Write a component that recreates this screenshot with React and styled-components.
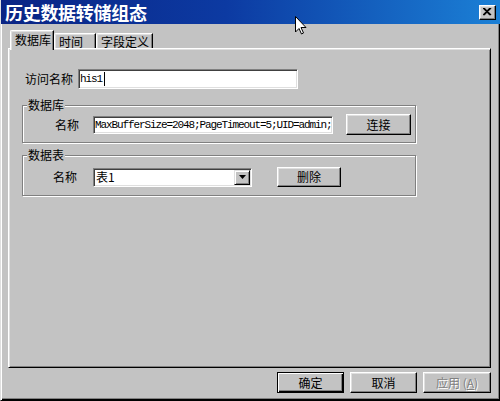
import React from 'react';
import styled, { createGlobalStyle } from 'styled-components';

const GlobalStyle = createGlobalStyle`
  html, body {
    margin: 0;
    padding: 0;
    background: #c3c3c3;
  }
  body {
    font-family: "Noto Sans CJK SC", "Liberation Sans", sans-serif;
    font-size: 12px;
  }
`;

const Window = styled.div`
  position: relative;
  width: 500px;
  height: 401px;
  box-sizing: border-box;
  background: #c3c3c3;
  display: flex;
  flex-direction: column;
  border-bottom: 1px solid #000;
  border-left: 1px solid #dfdfdf;
  box-shadow: inset 1px 0 #fff, inset -1px -1px #000, inset -2px -2px #808080;
  overflow: hidden;
`;

const TitleBar = styled.div`
  flex: none;
  height: 24px;
  display: flex;
  align-items: center;
  justify-content: space-between;
  padding: 0 4px 0 4px;
  background: linear-gradient(90deg, #0a2484 0%, #0c3aa2 45%, #1b80d6 100%);
`;

const Title = styled.span`
  color: #fff;
  font-weight: 700;
  font-size: 18px;
  line-height: 20px;
  letter-spacing: -0.3px;
`;

const CloseBox = styled.div`
  width: 17px;
  height: 15px;
  box-sizing: border-box;
  background: #c3c3c3;
  border: 1px solid;
  border-color: #fff #000 #000 #fff;
  box-shadow: inset -1px -1px #808080, inset 1px 1px #dfdfdf;
  display: flex;
  align-items: center;
  justify-content: center;
`;

const Body = styled.div`
  flex: 1;
  display: flex;
  flex-direction: column;
  padding: 6px 9px 0 7px;
`;

const TabStrip = styled.div`
  display: flex;
  align-items: flex-start;
  height: 20px;
  margin-bottom: -2px;
  padding-left: 2px;
  position: relative;
  z-index: 1;
`;

const Tab = styled.div`
  box-sizing: border-box;
  width: ${({ $w }) => $w}px;
  height: ${({ $active }) => ($active ? 20 : 15)}px;
  margin-top: ${({ $active }) => ($active ? 0 : 3)}px;
  padding: ${({ $active }) => ($active ? 3 : 2)}px 0 0 4px;
  line-height: 12px;
  color: #000;
  background: #c3c3c3;
  border-top: 1px solid #fff;
  border-left: 1px solid #fff;
  border-right: 1px solid #000;
  border-top-left-radius: 2px;
  box-shadow: inset -1px 0 #808080, inset 1px 1px #dfdfdf;
  white-space: nowrap;
`;

const Panel = styled.div`
  box-sizing: border-box;
  height: 320px;
  border: 1px solid;
  border-color: #fff #000 #000 #fff;
  box-shadow: inset 1px 1px #dfdfdf, inset -1px -1px #808080;
  padding: 20px 0 0 13px;
  display: flex;
  flex-direction: column;
  align-items: flex-start;
`;

const Row = styled.div`
  display: flex;
  align-items: center;
  padding-left: ${({ $indent }) => $indent || 0}px;
`;

const Label = styled.span`
  line-height: 12px;
  color: #000;
  margin-right: ${({ $gap }) => $gap}px;
  white-space: nowrap;
`;

const Sunken = styled.div`
  box-sizing: border-box;
  width: ${({ $w }) => $w}px;
  height: ${({ $h }) => $h}px;
  background: #fff;
  border: 1px solid;
  border-color: #808080 #fff #fff #808080;
  box-shadow: inset 1px 1px #404040, inset -1px -1px #dfdfdf;
  padding-left: 1px;
  display: flex;
  align-items: center;
  overflow: hidden;
  white-space: nowrap;
`;

const MonoText = styled.span`
  font-family: "Liberation Mono", monospace;
  font-size: 11px;
  letter-spacing: -1.1px;
  color: #000;
`;

const Caret = styled.span`
  display: inline-block;
  width: 1px;
  height: 14px;
  background: #000;
  margin-left: 2px;
`;

const Group = styled.fieldset`
  box-sizing: border-box;
  width: 394px;
  margin: ${({ $top }) => $top}px 0 0 0;
  padding: ${({ $pt }) => $pt}px 0 ${({ $pb }) => $pb}px 0;
  border: 1px solid #808080;
  box-shadow: inset 1px 1px #fff, 1px 1px #fff;
  min-width: 0;
`;

const Legend = styled.legend`
  margin-left: 4px;
  padding: 0 1px;
  line-height: 12px;
  color: #000;
  background: #c3c3c3;
`;

const Button = styled.div`
  box-sizing: border-box;
  width: ${({ $w }) => $w}px;
  height: ${({ $h }) => $h || 21}px;
  margin-left: ${({ $ml }) => $ml || 0}px;
  display: flex;
  align-items: center;
  justify-content: center;
  background: #c3c3c3;
  border: 1px solid;
  border-color: ${({ $default }) => ($default ? '#000' : '#fff #000 #000 #fff')};
  box-shadow: ${({ $default }) =>
    $default
      ? 'inset 1px 1px #fff, inset -1px -1px #000, inset -2px -2px #808080'
      : 'inset -1px -1px #808080, inset 1px 1px #dfdfdf'};
  color: ${({ $disabled }) => ($disabled ? '#808080' : '#000')};
  text-shadow: ${({ $disabled }) => ($disabled ? '1px 1px #fff' : 'none')};
  line-height: 12px;
  white-space: nowrap;
`;

const ComboText = styled.span`
  flex: 1;
  line-height: 12px;
  color: #000;
  padding-left: 1px;
`;

const DropButton = styled.div`
  box-sizing: border-box;
  width: 16px;
  height: 15px;
  background: #c3c3c3;
  border: 1px solid;
  border-color: #dfdfdf #000 #000 #dfdfdf;
  box-shadow: inset 1px 1px #fff, inset -1px -1px #808080;
  display: flex;
  align-items: center;
  justify-content: center;
  margin-right: 1px;
`;

const Footer = styled.div`
  display: flex;
  justify-content: flex-end;
  gap: 6px;
  margin-top: 4px;
`;

const Pointer = styled.svg`
  position: absolute;
  left: 294px;
  top: 16px;
`;

export default function App() {
  return (
    <>
      <GlobalStyle />
      <Window>
        <TitleBar>
          <Title>历史数据转储组态</Title>
          <CloseBox>
            <svg width="9" height="8" viewBox="0 0 9 8">
              <path d="M1 0 L8 7 M8 0 L1 7 M0 0 L7 7 M7 0 L0 7" stroke="#000" strokeWidth="1.2" fill="none" />
            </svg>
          </CloseBox>
        </TitleBar>
        <Body>
          <TabStrip>
            <Tab $active $w={44}>数据库</Tab>
            <Tab $w={42}>时间</Tab>
            <Tab $w={57}>字段定义</Tab>
          </TabStrip>
          <Panel>
            <Row $indent={3}>
              <Label $gap={5}>访问名称</Label>
              <Sunken $w={220} $h={20}>
                <MonoText>his1</MonoText>
                <Caret />
              </Sunken>
            </Row>
            <Group $top={10} $pt={3} $pb={7}>
              <Legend>数据库</Legend>
              <Row $indent={32}>
                <Label $gap={14}>名称</Label>
                <Sunken $w={240} $h={18}>
                  <MonoText>MaxBufferSize=2048;PageTimeout=5;UID=admin;</MonoText>
                </Sunken>
                <Button $w={65} $ml={13}>连接</Button>
              </Row>
            </Group>
            <Group $top={6} $pt={6} $pb={8}>
              <Legend>数据表</Legend>
              <Row $indent={30}>
                <Label $gap={16}>名称</Label>
                <Sunken $w={159} $h={19}>
                  <ComboText>表1</ComboText>
                  <DropButton>
                    <svg width="7" height="4" viewBox="0 0 7 4">
                      <path d="M0 0 H7 L3.5 4 Z" fill="#000" />
                    </svg>
                  </DropButton>
                </Sunken>
                <Button $w={64} $h={20} $ml={25}>删除</Button>
              </Row>
            </Group>
          </Panel>
          <Footer>
            <Button $w={67} $default>确定</Button>
            <Button $w={67}>取消</Button>
            <Button $w={68} $disabled>
              应用 (<u>A</u>)
            </Button>
          </Footer>
        </Body>
        <Pointer width="12" height="19" viewBox="0 0 12 19">
          <path d="M0.5 0.5 L0.5 16 L4 12.5 L6.5 18 L8.5 17 L6 11.5 L11 11.5 Z" fill="#fff" stroke="#000" strokeWidth="1" />
        </Pointer>
      </Window>
    </>
  );
}
